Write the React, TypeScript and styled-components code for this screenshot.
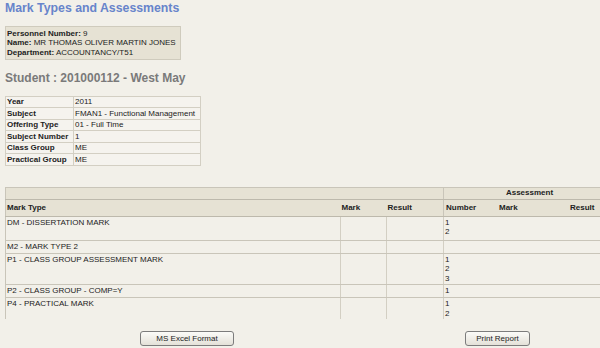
import React from "react";
import styled, { createGlobalStyle } from "styled-components";

const GlobalStyle = createGlobalStyle`
  html, body {
    margin: 0;
    padding: 0;
    background: #f2f0e9;
    overflow: hidden;
  }
  body {
    font-family: "Liberation Sans", Arial, sans-serif;
    font-size: 8px;
    color: #222;
  }
`;

const Page = styled.div`
  padding: 1px 0 0 5px;
  width: 620px;
`;

const Title = styled.h1`
  margin: 0;
  font-size: 12.3px;
  line-height: 14px;
  font-weight: bold;
  color: #6784cb;
`;

const InfoBox = styled.div`
  margin-top: 11px;
  width: 173px;
  padding: 2px 0 2px 1px;
  background: #e6e2d4;
  border: 1px solid #cfcbbd;
  line-height: 9.3px;
`;

const Label = styled.b`
  font-weight: bold;
`;

const StudentHeading = styled.h2`
  margin: 11px 0 0;
  font-size: 12px;
  line-height: 14px;
  font-weight: bold;
  color: #7a7a7a;
`;

const DetailsTable = styled.table`
  margin-top: 11px;
  border-collapse: collapse;
  width: 196px;
  table-layout: fixed;
  border: 1px solid #c9c5b9;

  td {
    border: 1px solid #d3cfc3;
    padding: 0 1px;
    height: 10.5px;
    line-height: 10px;
    white-space: nowrap;
    overflow: hidden;
    background: #f5f3ee;
  }
  td:first-child {
    font-weight: bold;
    width: 65px;
  }
`;

const MainTable = styled.table`
  margin-top: 21px;
  border-collapse: collapse;
  table-layout: fixed;
  width: 610px;
  border-left: 1px solid #c9c5b9;

  tbody tr:last-child td {
    border-bottom: none;
  }
`;

const HeadCell = styled.th<{ $height: number; $align?: string }>`
  height: ${(p) => p.$height}px;
  padding: 0 1px;
  background: #e6e2d4;
  border-top: 1px solid #c9c5b9;
  border-bottom: 1px solid #bdb9ac;
  text-align: ${(p) => p.$align || "left"};
  font-weight: bold;
  vertical-align: middle;
  line-height: 10px;
`;

const AssessHead = styled(HeadCell)`
  border-left: 1px solid #c9c5b9;
  padding: 0;
`;

const AssessCols = styled.div`
  display: grid;
  grid-template-columns: 53px 71px 1fr;
  padding: 0 0 0 2px;
`;

const Cell = styled.td<{ $divider?: boolean }>`
  vertical-align: top;
  padding: 1px 1px 0;
  line-height: 9.6px;
  border-bottom: 1px solid #c9c5b9;
  border-left: ${(p) => (p.$divider ? "1px solid #d3cfc3" : "none")};
  white-space: nowrap;
`;

const ButtonRow = styled.div`
  display: flex;
  gap: 231px;
  padding-left: 135px;
  margin-top: 12px;
`;

const ReportButton = styled.button<{ $width: number }>`
  width: ${(p) => p.$width}px;
  height: 15px;
  padding: 0;
  font-family: "Liberation Sans", Arial, sans-serif;
  font-size: 8px;
  color: #222;
  background: linear-gradient(#fbfbf8, #e4e1d8);
  border: 1px solid #7c7c7c;
  border-radius: 3px;
`;

const details: [string, string][] = [
  ["Year", "2011"],
  ["Subject", "FMAN1 - Functional Management"],
  ["Offering Type", "01 - Full Time"],
  ["Subject Number", "1"],
  ["Class Group", "ME"],
  ["Practical Group", "ME"],
];

const markRows: { type: string; numbers: string[]; lines: number }[] = [
  { type: "DM - DISSERTATION MARK", numbers: ["1", "2"], lines: 2 },
  { type: "M2 - MARK TYPE 2", numbers: [], lines: 1 },
  { type: "P1 - CLASS GROUP ASSESSMENT MARK", numbers: ["1", "2", "3"], lines: 3 },
  { type: "P2 - CLASS GROUP - COMP=Y", numbers: ["1"], lines: 1 },
  { type: "P4 - PRACTICAL MARK", numbers: ["1", "2"], lines: 2 },
];

export default function App() {
  return (
    <>
      <GlobalStyle />
      <Page>
        <Title>Mark Types and Assessments</Title>
        <InfoBox>
          <div>
            <Label>Personnel Number:</Label> 9
          </div>
          <div>
            <Label>Name:</Label> MR THOMAS OLIVER MARTIN JONES
          </div>
          <div>
            <Label>Department:</Label> ACCOUNTANCY/T51
          </div>
        </InfoBox>
        <StudentHeading>Student : 201000112 - West May</StudentHeading>
        <DetailsTable>
          <tbody>
            {details.map(([k, v]) => (
              <tr key={k}>
                <td>{k}</td>
                <td>{v}</td>
              </tr>
            ))}
          </tbody>
        </DetailsTable>
        <MainTable>
          <colgroup>
            <col style={{ width: 335 }} />
            <col style={{ width: 46 }} />
            <col style={{ width: 57 }} />
            <col />
          </colgroup>
          <thead>
            <tr>
              <HeadCell $height={11} colSpan={3} />
              <AssessHead $height={11} $align="center">
                Assessment
              </AssessHead>
            </tr>
            <tr>
              <HeadCell $height={16}>Mark Type</HeadCell>
              <HeadCell $height={16}>Mark</HeadCell>
              <HeadCell $height={16}>Result</HeadCell>
              <AssessHead $height={16}>
                <AssessCols>
                  <span>Number</span>
                  <span>Mark</span>
                  <span>Result</span>
                </AssessCols>
              </AssessHead>
            </tr>
          </thead>
          <tbody>
            {markRows.map((r, i) => (
              <tr key={r.type}>
                <Cell style={{ height: r.lines * 9.6 + (i === 0 ? 3 : 1) }}>{r.type}</Cell>
                <Cell $divider />
                <Cell $divider />
                <Cell $divider>
                  {r.numbers.map((n) => (
                    <div key={n}>{n}</div>
                  ))}
                </Cell>
              </tr>
            ))}
          </tbody>
        </MainTable>
        <ButtonRow>
          <ReportButton $width={94}>MS Excel Format</ReportButton>
          <ReportButton $width={65}>Print Report</ReportButton>
        </ButtonRow>
      </Page>
    </>
  );
}
